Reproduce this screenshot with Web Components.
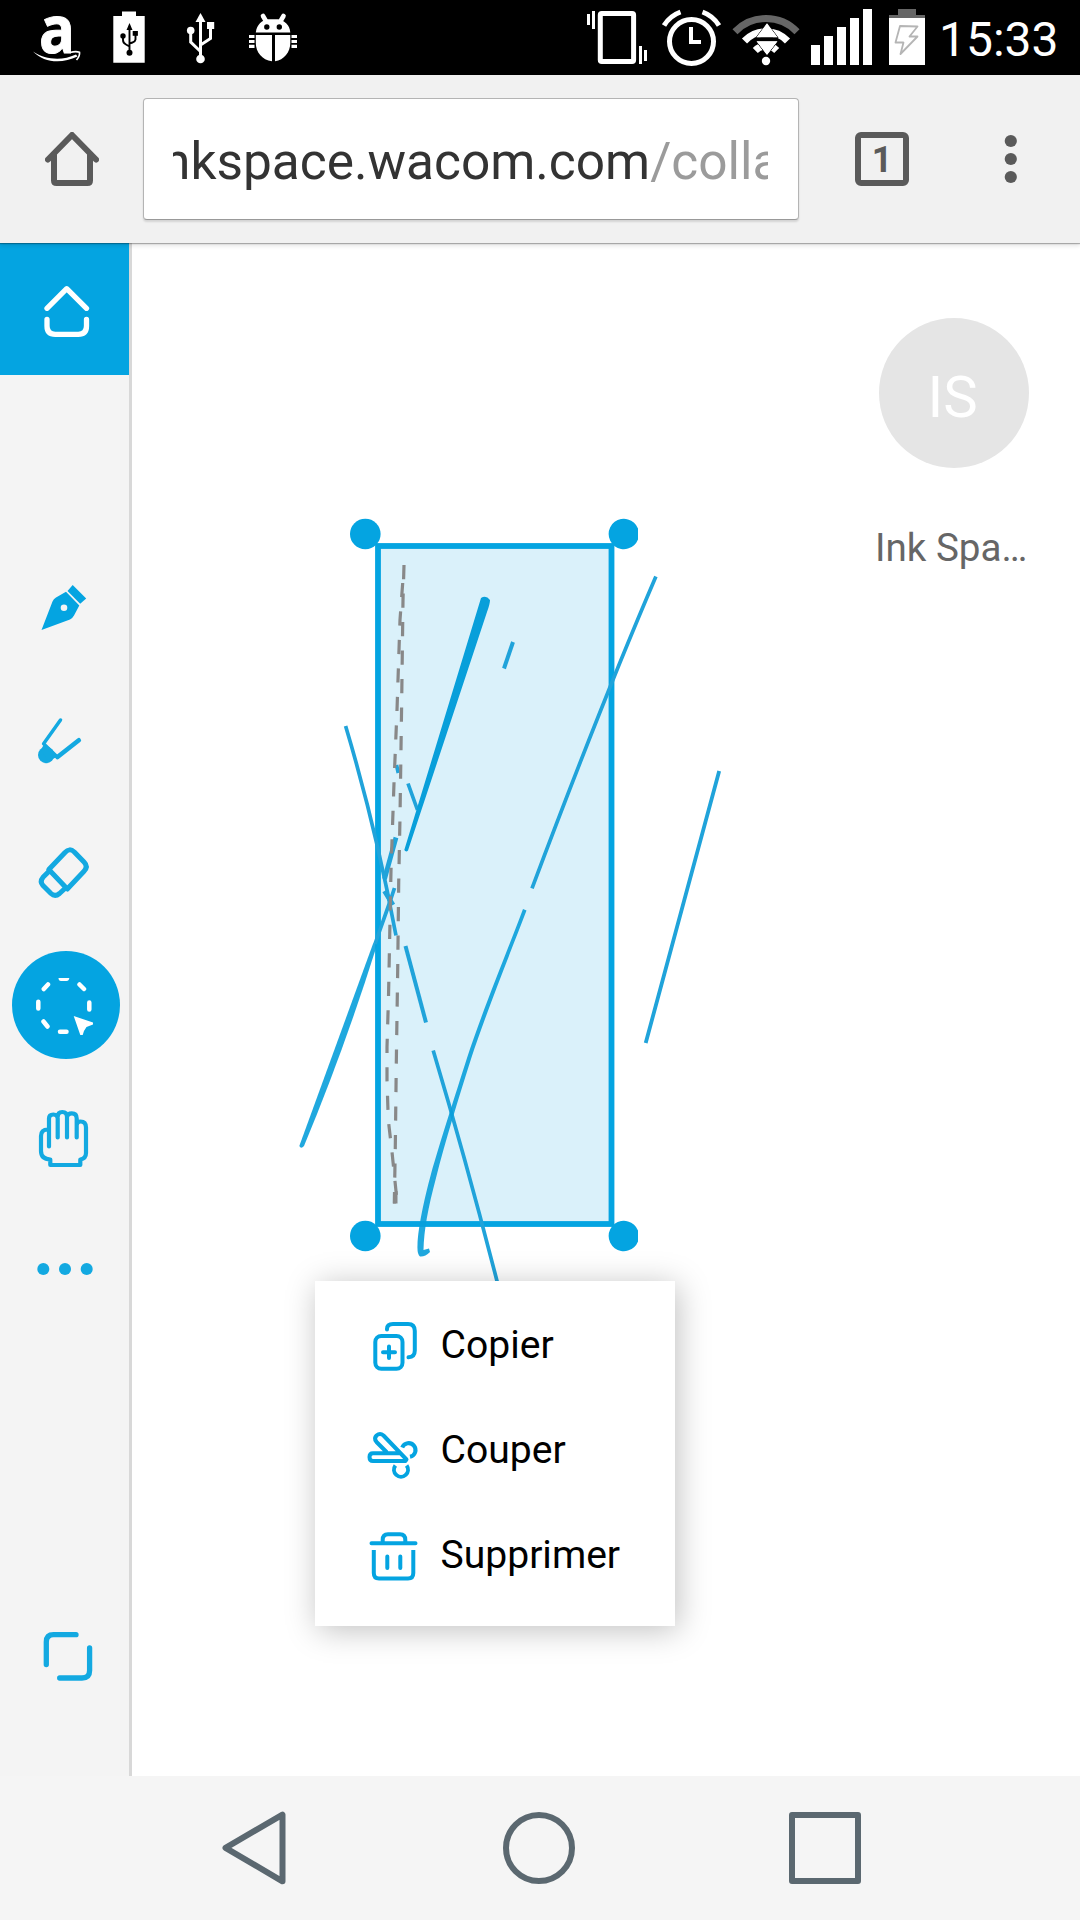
<!DOCTYPE html>
<html lang="fr">
<head>
<meta charset="utf-8">
<title>Ink Space</title>
<style>
html,body{margin:0;padding:0;background:#fff}
body{font-family:Roboto,"Noto Sans",sans-serif;width:1080px;height:1920px;overflow:hidden}
</style>
</head>
<body>
<ink-app></ink-app>
<script>
const define = (name, css, html) => customElements.define(name, class extends HTMLElement {
  constructor() {
    super();
    this.attachShadow({mode: 'open'}).innerHTML = `<style>*{box-sizing:border-box}svg{display:block}${css}</style>${html}`;
  }
});

define('status-bar', `
:host{display:flex;justify-content:space-between;height:75px;background:#000;color:#fff;flex:none}
.right{display:flex}
time{font-size:48px;line-height:75px;width:141px;padding-top:2px;white-space:nowrap}
`, `
<svg width="320" height="75" viewBox="0 0 320 75" fill="#fff">
  <text x="39" y="52.500" font-family="Open Sans" font-weight="700" font-size="66" textLength="36" lengthAdjust="spacingAndGlyphs" stroke="#fff" stroke-width="1">a</text>
  <path d="M33 51.5C46 60 62 61 76 54.5L77.500 56.500C62 64 44 63 33 51.500Z"/><path d="M70 52.500Q76 51 79.500 52.300Q80 56 76.500 60" fill="none" stroke="#fff" stroke-width="1.700"/>
  <path d="M113.300 16H122V11.500H136V16H144.700V62.700H113.300Z"/>
  <g fill="#000"><path d="M129.500 23L132.500 30H126.500Z"/><circle cx="123" cy="36" r="2.700"/><rect x="132.700" y="31" width="5.200" height="4.800"/><circle cx="129.500" cy="52.700" r="3"/></g>
  <path d="M129.500 29V52M123 36V40Q123 43 126 44.500L129.500 46.500M135.500 35V39.500Q135 42 132.500 42.500L129.500 43.500" fill="none" stroke="#000" stroke-width="1.900"/>
  <path d="M200.500 13L205.500 22H195.500Z"/><circle cx="190.700" cy="30.500" r="3.800"/><rect x="207" y="22" width="7.200" height="7"/><circle cx="200.500" cy="59" r="4.300"/>
  <path d="M200.500 20V57M190.700 31V42L200.500 51.500M210.500 28V38.500L200.500 45" fill="none" stroke="#fff" stroke-width="3"/>
  <path d="M255.800 32.500C256.500 25 262 20 268 19.300H278C284.500 20.300 289.700 25 290.300 32.500Z"/>
  <path d="M263 16L266.500 22M283.500 16L280 22" stroke="#fff" stroke-width="4.600" stroke-linecap="round"/>
  <circle cx="266.800" cy="27" r="2.700" fill="#000"/><circle cx="279.300" cy="27" r="2.700" fill="#000"/>
  <path d="M255.800 35H272V61.300C262 60 255.800 52 255.800 43ZM275 35H290.300V43C290.300 52 284 60 275 61.300Z"/>
  <path d="M249 36.500H254.500M249 41.500H254.500M249 46.300H254.500M291.500 36.500H297M291.500 41.500H297M291.500 46.300H297" stroke="#fff" stroke-width="3.200"/>
</svg>
<div class="right">
<svg width="359" height="75" viewBox="580 0 359 75" fill="none" stroke="#fff">
  <rect x="600.300" y="13.500" width="33.300" height="48" rx="1.500" stroke-width="5"/>
  <path d="M588.500 14V25M593.500 11V29M640.500 46V64M645.500 50V61" stroke-width="3"/>
  <circle cx="691.500" cy="41.500" r="22" stroke-width="5"/>
  <path d="M691 27V42H701" stroke-width="4"/>
  <path d="M664 25.500A32 32 0 0 1 680.500 12M702.500 12A32 32 0 0 1 719 25.500" stroke-width="5"/>
  <path d="M735 31.700A43 43 0 0 1 797 31.700" stroke="#666" stroke-width="7"/>
  <path d="M744.500 41A29.500 29.500 0 0 1 787.500 41M755.300 50.500A15 15 0 0 1 776.700 50.500" stroke-width="7"/>
  <circle cx="766" cy="61" r="4.200" fill="#fff" stroke="none"/>
  <path d="M767 23L778 37.700H756ZM756 41H778L767 55.300Z" fill="#fff" stroke="#000" stroke-width="1"/>
  <path d="M760.500 38.500H773" stroke="#000" stroke-width="4"/><path d="M767 23.300L777.500 37.300H756.500ZM756.500 41.200H777.500L767 55Z" fill="#fff" stroke="none"/>
  <path d="M811 45h9v20h-9zM824 36h9v29h-9zM837 27h9v38h-9zM850 18h9v47h-9zM863 9h9v56h-9z" fill="#fff" stroke="none"/>
  <path d="M898 9H916V15H925V18H889V15H898Z" fill="#666" stroke="none"/><rect x="889" y="18" width="36" height="47" fill="#fff" stroke="none"/>
  <path d="M900 26L917.500 26.500L909.500 36.500H917.500L900.500 54L903.500 42.500H895.500Z" stroke="#b5b5b5" stroke-width="1.800" stroke-linejoin="round"/>
</svg><time>15:33</time></div>`);

define('browser-bar', `
:host{display:flex;align-items:flex-start;height:168px;background:#f1f1f1;flex:none;position:relative;z-index:2;box-shadow:0 1px 1px rgba(0,0,0,.28),0 3px 4px rgba(0,0,0,.1);padding-top:23px}
.home{margin:34px 44px 0 45px}
.url{width:656px;height:122px;background:#fff;border:1px solid #b4b4b4;border-bottom-color:#999;border-radius:4px;padding:0 30px 0 29px;box-shadow:0 2px 2px rgba(0,0,0,.12)}
.clip{overflow:hidden;display:flex;height:120px;width:595px}
.txt{font-size:51.4px;line-height:126px;color:#333;white-space:nowrap;margin-left:-11px}
.txt span{color:#9b9b9b}
.tab{margin:34px 0 0 56px;width:54px;height:54px;border:6px solid #5a5a5a;border-radius:6px;text-align:center;font-weight:700;font-size:36px;line-height:44px;color:#5a5a5a}
.menu{margin:31px 0 0 84px}
`, `
<svg class="home" width="54" height="54" viewBox="45 132 54 54" fill="none" stroke="#5a5a5a" stroke-width="6" stroke-linecap="round" stroke-linejoin="round"><path d="M48 159.500L72 135L96 159.500"/><path d="M54 155V180.500Q54 183 56.500 183H87.500Q90 183 90 180.500V155"/></svg>
<div class="url"><div class="clip"><div class="txt">nkspace.wacom.com<span>/colla</span></div></div></div>
<div class="tab">1</div>
<svg class="menu" width="36" height="60" viewBox="993 129 36 60" fill="#5a5a5a"><circle cx="1010.800" cy="141" r="6.100"/><circle cx="1010.800" cy="159" r="6.100"/><circle cx="1010.800" cy="177" r="6.100"/></svg>`);

define('tool-bar', `
:host{display:flex;flex-direction:column;width:132px;background:#f4f4f4;border-right:3px solid #d8d8d8;flex:none}
.home{background:#04a4e1;margin-bottom:165px}
.expand{margin-top:auto}
`, `
<svg class="home" width="129" height="132" viewBox="0 243 129 132" fill="none" stroke="#fff" stroke-width="5.300" stroke-linecap="round" stroke-linejoin="round"><path d="M47 308.300L66.700 288.700L86.500 308.300M47 319.500V326Q47 334.300 55.300 334.300H78.200Q86.500 334.300 86.500 326V319.500"/></svg>
<svg width="129" height="134" viewBox="0 540 129 134" fill="#04a4e1"><path fill-rule="evenodd" d="M41.500 630L52.500 601.500Q53.500 599 56 597.500L66 591.700L79.300 605.500L74 615.500Q72.700 618 70 619.500ZM67.300 607.700A3.300 3.300 0 1 0 60.700 607.700A3.300 3.300 0 1 0 67.300 607.700Z"/><path d="M72.700 585L86.200 598.500L80.200 603.800L67.500 591Z"/></svg>
<svg width="129" height="132" viewBox="0 674 129 132" fill="none" stroke="#13a9e1" stroke-linecap="round" stroke-linejoin="round"><circle cx="46.200" cy="755" r="8.200" fill="#13a9e1" stroke="none"/><path d="M44 744L57 757L48 761L41 750Z" fill="#13a9e1" stroke="none"/><path d="M60.500 720L43.600 743.700L57.300 757" stroke-width="3.500"/><path d="M57.500 757L78.800 740.300" stroke-width="4.600"/></svg>
<svg width="129" height="132" viewBox="0 806 129 132" fill="none" stroke="#13a9e1" stroke-width="5" stroke-linejoin="round"><path d="M48.800 869.500L65 852.500Q69.500 847.500 74.300 852L84 862Q88.500 866.500 84 871.300L67.300 889Z"/><path d="M48.800 871.500L43 877.300Q39.500 881.500 43 885.500L51 893.500Q55 897.200 59.500 893.500L65.500 888"/></svg>
<svg width="129" height="134" viewBox="0 938 129 134" fill="none" stroke="#fff" stroke-width="4.500" stroke-linecap="round"><circle cx="66" cy="1005" r="54" fill="#04a4e1" stroke="none"/><path d="M38.300 1001.700V1008.500M89.300 1002.500V1009.500M60 1031.700H66.500M43.800 989L48 984.500M79.500 984.500L84 989M43.500 1021.500L47.500 1026.500"/><path d="M58.500 978H69.300Q69 981 66.500 981H61Q58.500 981 58.500 978Z" fill="#fff" stroke="none"/><path d="M73.700 1016L93 1022.500V1024.500L86.500 1027Q84 1030 82.700 1035H80.300Z" fill="#fff" stroke="none"/></svg>
<svg width="129" height="132" viewBox="0 1072 129 132" fill="none" stroke="#13a9e1" stroke-width="4.200" stroke-linecap="round" stroke-linejoin="round"><path d="M49 1146.500V1118.500Q49 1114.500 53.300 1114.500Q57.700 1114.500 57.700 1118.500V1137.500M57.700 1117Q57.700 1112 62.300 1112Q67 1112 67 1117V1137.500M67 1117Q67.500 1113.300 71.800 1113.300Q76.700 1113.300 76.700 1118.500V1137.500M76.700 1125Q77 1121.500 80.500 1121.500Q86 1121.500 86 1127.500V1153Q86 1158.500 80.300 1159.500V1165H50.300V1159.500Q41 1159 41 1151V1136Q41 1129.500 48 1129.500"/></svg>
<svg width="129" height="132" viewBox="0 1204 129 132" fill="#13a9e1"><circle cx="43.300" cy="1269" r="6"/><circle cx="65" cy="1269" r="6"/><circle cx="86.700" cy="1269" r="6"/></svg>
<svg class="expand" width="129" height="176" viewBox="0 1600 129 176" fill="none" stroke="#13a9e1" stroke-width="5.300" stroke-linecap="round"><path d="M76 1634.700H53.500Q46.300 1634.700 46.300 1642V1664.500M89.600 1648V1670.500Q89.600 1678 82 1678H59.700"/></svg>`);

define('ink-canvas', `:host{display:block}`, `
<svg width="948" height="1533" viewBox="132 243 948 1533">
  <rect x="378" y="546" width="233.500" height="678" fill="#daf1fa" stroke="#04a4e1" stroke-width="5.800"/>
  <g fill="#04a4e1"><circle cx="365.300" cy="534" r="15.300"/><path d="M638 528.500V539.500A15.200 15.200 0 1 1 638 528.500ZM638 1230.500V1241.500A15.200 15.200 0 1 1 638 1230.500Z"/><circle cx="365.300" cy="1236" r="15.300"/></g>
  <g fill="none" stroke="#20a3da" stroke-width="3.700">
    <path d="M513 642L504 668.500" stroke-width="4"/>
    <path d="M655.900 576.500Q602 702 532 888.300"/>
    <path d="M719.200 771L684.300 900L645.700 1043" stroke-width="3.800"/>
    <path d="M345.600 726Q376 828 396 935.500"/>
    <path d="M405.500 946L426 1022.500" stroke-width="4"/>
    <path d="M433.200 1050.500Q466 1160 497.500 1283"/>
    <path d="M408 783.500L417.500 810M396.500 765L398.300 773"/>
    <path d="M384.500 891L393 905M396 837.500L384.500 879" stroke-width="4.800"/>
    <path d="M394.500 888Q391 899 387 910L375 944"/>
  </g>
  <g fill="#089fda">
    <path d="M481 598Q486 594.500 490 600Q490 604 487 612L408 850.500Q406 852.500 404.300 850Z"/>
    <path d="M373.300 943L377 945Q344 1050 304 1146Q301 1149.500 299.300 1146Z" opacity=".9"/>
    <path d="M523 909L526.500 910.500C511.500 950 486 1013 471 1059C459 1097 445 1142 436 1178C428 1208 424 1230 423.500 1250L429 1248.500L430 1252Q425 1257 420 1256.500Q417 1254.500 417.500 1245C418 1228 424 1200 431 1174C440 1142 455 1096 467 1058C482 1012 508 949 523 909Z" opacity=".9"/>
  </g>
  <g fill="none" stroke="#888" stroke-width="3.200" stroke-dasharray="14.200 14.300">
    <path d="M404 565L403 600L401.700 700L400 817L398.700 883L397.700 970L396.300 1063L395.300 1147L394.300 1203.500"/>
    <path d="M402.700 583L400 620L397 710L394 783L391 870L388.500 997L387 1047V1080L388.300 1120L392 1152L396.500 1196"/>
    <path d="M396.500 1191V1202.500H393" stroke-width="2" stroke-dasharray="none"/>
  </g>
</svg>`);

define('user-badge', `
:host{display:flex;flex-direction:column;width:154px}
.avatar{width:150px;height:150px;margin-left:4px;border-radius:50%;background:#e5e5e5;color:#fff;font-size:58px;line-height:158px;text-align:center;padding-right:3px}
.name{margin-top:56px;font-size:38.6px;line-height:48px;color:#666;white-space:nowrap}
`, `<div class="avatar">IS</div><div class="name"><slot></slot></div>`);

define('menu-item', `
:host{display:flex;height:105px;color:#000;font-size:39.1px;line-height:105px;white-space:nowrap}
.i{width:125.500px;flex:none}
`, `<div class="i"><slot name="icon"></slot></div><slot></slot>`);

define('context-menu', `
:host{display:flex;flex-direction:column;width:360px;height:345px;padding:12px 0;background:#fff;box-shadow:3px 4px 30px rgba(0,0,0,.25)}
g{stroke:#04a4e1;stroke-width:4;fill:none;stroke-linecap:round;stroke-linejoin:round}
`, `
<menu-item><svg slot="icon" width="125" height="105" viewBox="315 1293 125 105"><g><rect x="375.300" y="1336" width="27.200" height="32.800" rx="6"/><path d="M389 1346.500V1358M383 1352.300H395"/><path d="M387 1329.500V1329Q387 1324 393 1324H408Q414.800 1324 414.800 1331V1350.500Q414.800 1357 408.500 1357.300"/></g></svg>Copier</menu-item>
<menu-item><svg slot="icon" width="125" height="105" viewBox="315 1398 125 105"><g><path d="M386.500 1452L376.500 1442Q373.500 1438.500 376.500 1435.500Q380 1432.500 383.500 1435.500L406.500 1459.500L405.500 1461H373Q369.500 1461 369.500 1457Q369.500 1453.300 373 1453.300H399.500"/><path d="M402.200 1447.500A6.900 6.900 0 1 1 410 1456.800M395.400 1465.500A7 7 0 1 0 406.600 1465.500" stroke-linecap="butt"/></g></svg>Couper</menu-item>
<menu-item><svg slot="icon" width="125" height="105" viewBox="315 1503 125 105"><g><path d="M371.500 1543.300H415.500M382.700 1542V1540Q382.700 1534.300 388 1534.300H400Q405.300 1534.300 405.300 1540V1542M387.300 1556.500V1568M400.300 1556.500V1568"/><path d="M373.800 1550V1573Q373.800 1578.500 379 1578.500H408Q413.300 1578.500 413.300 1573V1550" stroke-linecap="butt"/></g></svg>Supprimer</menu-item>`);

define('nav-bar', `
:host{display:flex;height:144px;align-items:center;background:#f5f5f5;flex:none;padding-left:222px;gap:214px}
g{fill:none;stroke:#5b6870;stroke-width:6;stroke-linejoin:round}
`, `
<svg width="67" height="74" viewBox="222 1811 67 74"><g><path d="M225.500 1847.800L282.500 1814.700V1881.300Z"/></g></svg>
<svg width="72" height="74" viewBox="503 1811 72 74"><g><circle cx="539" cy="1848" r="33"/></g></svg>
<svg width="72" height="74" viewBox="789 1811 72 74"><g><rect x="792" y="1815" width="66" height="66"/></g></svg>`);

define('ink-app', `
:host{display:flex;flex-direction:column;width:1080px;height:1920px}
main{display:flex;flex:1;min-height:0;background:#fff}
.stage{position:relative;flex:1}
user-badge{position:absolute;right:51px;top:75px}
context-menu{position:absolute;left:183px;top:1038px}
`, `
<status-bar></status-bar>
<browser-bar></browser-bar>
<main><tool-bar></tool-bar><div class="stage"><ink-canvas></ink-canvas><user-badge>Ink Spa…</user-badge><context-menu></context-menu></div></main>
<nav-bar></nav-bar>`);
</script>
</body>
</html>
